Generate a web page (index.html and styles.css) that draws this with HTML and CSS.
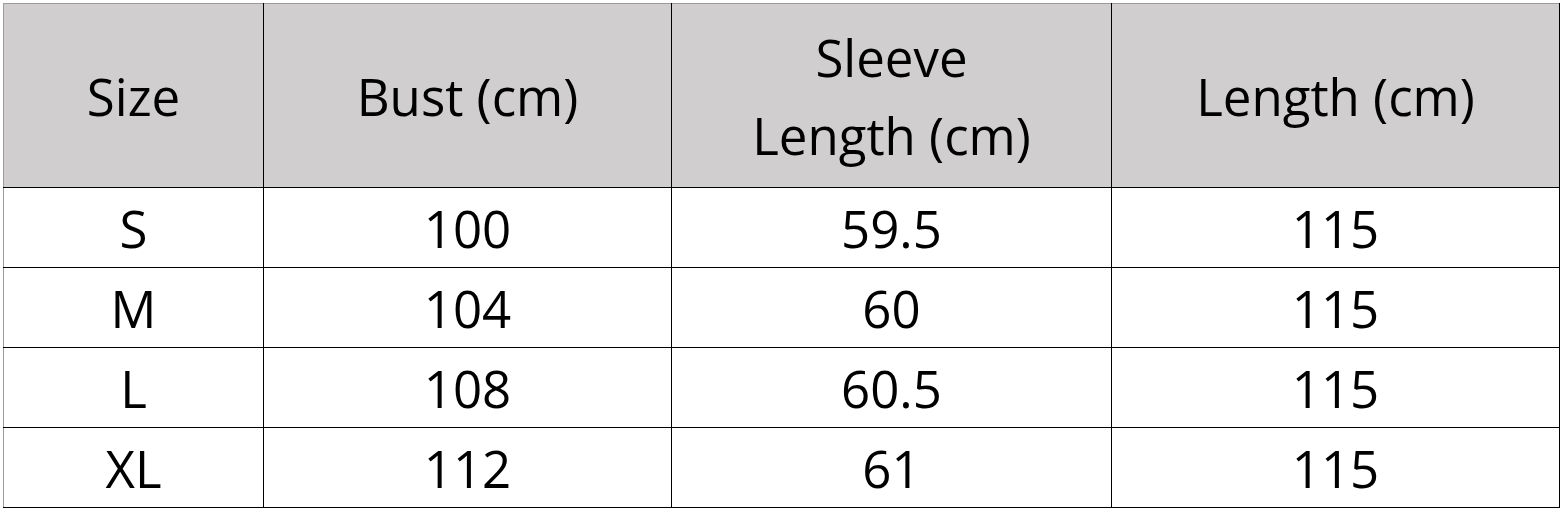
FILE: index.html
```html
<!DOCTYPE html>
<html>
<head>
<meta charset="utf-8">
<link rel="stylesheet" href="styles.css">
</head>
<body>
<div class="sheet">
<table class="size-table">
  <colgroup>
    <col class="c1"><col class="c2"><col class="c3"><col class="c4">
  </colgroup>
  <thead>
    <tr>
      <th>Size</th>
      <th>Bust (cm)</th>
      <th>Sleeve<br>Length (cm)</th>
      <th>Length (cm)</th>
    </tr>
  </thead>
  <tbody>
    <tr><td>S</td><td>100</td><td>59.5</td><td>115</td></tr>
    <tr><td>M</td><td>104</td><td>60</td><td>115</td></tr>
    <tr><td>L</td><td>108</td><td>60.5</td><td>115</td></tr>
    <tr><td>XL</td><td>112</td><td>61</td><td>115</td></tr>
  </tbody>
</table>
</div>
</body>
</html>
```

FILE: styles.css
```css
html, body {
  margin: 0;
  padding: 0;
  background: #ffffff;
}
.sheet {
  padding: 3px 0 0 3px;
}
.size-table {
  border-collapse: collapse;
  table-layout: fixed;
  font-family: "Open Sans", "Noto Sans", sans-serif;
  font-size: 51px;
  color: #000;
  border-top: 1px solid #9c9c9c;
  border-left: 1px solid #9c9c9c;
}
.c1 { width: 260px; }
.c2 { width: 408px; }
.c3 { width: 440px; }
.c4 { width: 448px; }
.size-table th,
.size-table td {
  padding: 0;
  text-align: center;
  vertical-align: middle;
  border-right: 1px solid #000;
  border-bottom: 1px solid #000;
}
.size-table th:first-child,
.size-table td:first-child {
  border-left: 1px solid #9c9c9c;
}
.size-table thead th {
  background: #d0cece;
  font-weight: normal;
  height: 183px;
  line-height: 78px;
}
.size-table tbody td {
  height: 79px;
  line-height: 60px;
}
```
